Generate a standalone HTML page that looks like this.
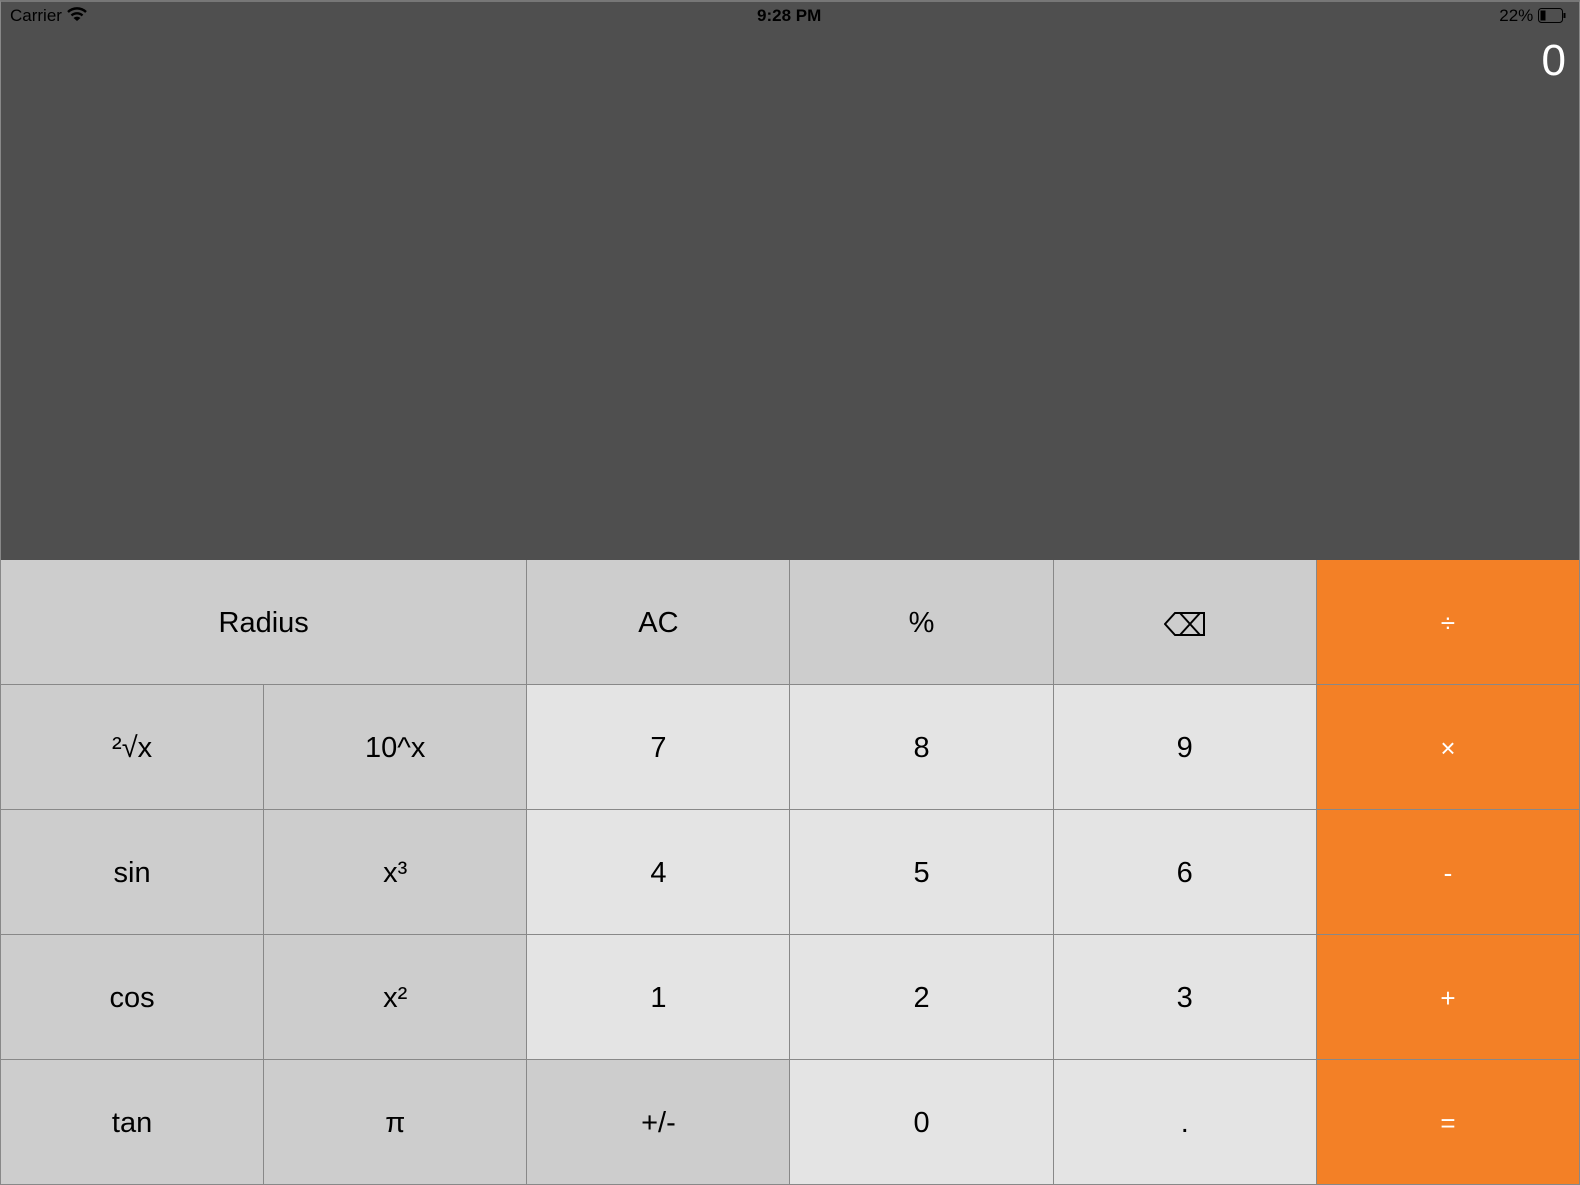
<!DOCTYPE html>
<html><head><meta charset="utf-8"><style>
*{margin:0;padding:0;box-sizing:border-box}
body{width:1580px;height:1185px;background:#4f4f4f;font-family:"Liberation Sans",sans-serif;position:relative;overflow:hidden}
.frame{position:absolute;inset:0;border:1px solid #888;border-top:2px solid #777;pointer-events:none}
.sb{position:absolute;top:6px;font-size:17px;color:#000}
.disp{position:absolute;right:14px;top:36px;font-size:44px;color:#fff}
.pad{position:absolute;left:0;top:560px;width:1580px;height:625px;display:grid;grid-template-columns:repeat(6,1fr);grid-template-rows:repeat(5,1fr);background:#888;gap:1px;padding:0 1px 1px 1px}
.k{display:flex;align-items:center;justify-content:center;font-size:29px;color:#000;padding-top:3px}
.f{background:#cdcdcd}.d{background:#e4e4e4}.o{background:#f38026;color:#fff;font-size:26px}
</style></head><body>
<div class="sb" style="left:10px">Carrier <svg width="20" height="15" viewBox="0 0 20 15" style="vertical-align:-1px"><path d="M1 5 A13 13 0 0 1 19 5" stroke="#000" stroke-width="2.4" fill="none"/><path d="M4.5 8.5 A8 8 0 0 1 15.5 8.5" stroke="#000" stroke-width="2.4" fill="none"/><path d="M10 14 L6.5 11 A5 5 0 0 1 13.5 11 Z" fill="#000"/></svg></div>
<div class="sb" style="left:757px;font-weight:bold">9:28 PM</div>
<div class="sb" style="right:14px">22% <svg width="28" height="15" viewBox="0 0 28 15" style="vertical-align:-2px"><rect x="0.5" y="0.5" width="24" height="14" rx="3" fill="none" stroke="#000"/><rect x="2.5" y="2.5" width="5" height="10" fill="#000"/><rect x="25.5" y="5" width="2" height="5" fill="#000"/></svg></div>
<div class="disp">0</div>
<div class="pad">
<div class="k f" style="grid-column:span 2">Radius</div>
<div class="k f">AC</div><div class="k f">%</div>
<div class="k f"><svg width="42" height="26" viewBox="0 0 42 26"><path d="M1 13 L11 2 H40 V24 H11 Z M16 2 L36 24 M36 2 L16 24" stroke="#000" stroke-width="2" fill="none"/></svg></div>
<div class="k o">÷</div>
<div class="k f">²√x</div><div class="k f">10^x</div>
<div class="k d">7</div><div class="k d">8</div><div class="k d">9</div><div class="k o">×</div>
<div class="k f">sin</div><div class="k f">x³</div>
<div class="k d">4</div><div class="k d">5</div><div class="k d">6</div><div class="k o">-</div>
<div class="k f">cos</div><div class="k f">x²</div>
<div class="k d">1</div><div class="k d">2</div><div class="k d">3</div><div class="k o">+</div>
<div class="k f">tan</div><div class="k f">π</div>
<div class="k f">+/-</div><div class="k d">0</div><div class="k d">.</div><div class="k o">=</div>
</div>
<div class="frame"></div>
</body></html>
